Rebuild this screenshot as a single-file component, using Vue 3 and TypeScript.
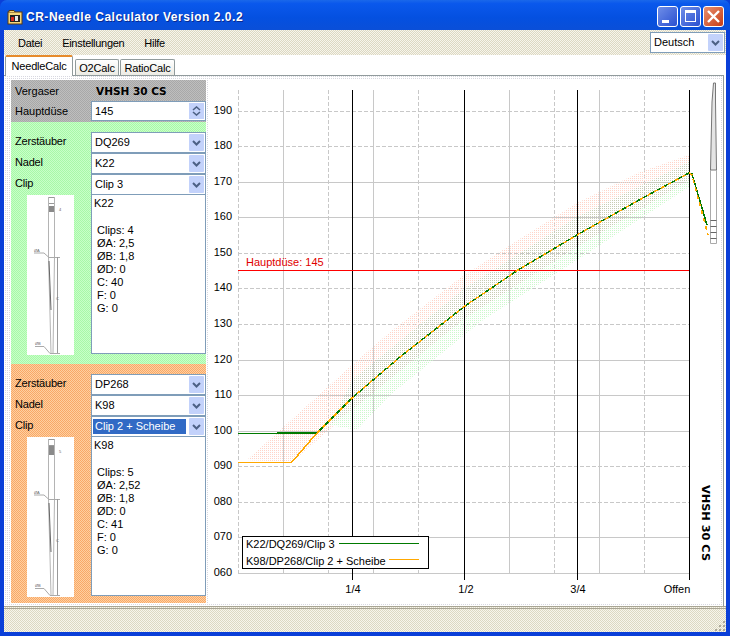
<template>
  <div class="window">
    <div class="titlebar">
      <svg class="app-icon" width="16" height="16" viewBox="0 0 16 16">
        <rect x="1" y="3" width="14" height="12" fill="#f4d67a" stroke="#5a3a10" />
        <path d="M2 3 V1.5 H7 L8 3" fill="#f4d67a" stroke="#5a3a10" />
        <rect x="3" y="6" width="10" height="7" fill="#222" />
        <rect x="4" y="8" width="3" height="4" fill="#d8261c" />
        <rect x="8" y="7" width="3" height="5" fill="#e8e8e8" />
      </svg>
      <span class="title">CR-Needle Calculator Version 2.0.2</span>
      <div class="caption-buttons">
        <button class="cap">
          <svg width="21" height="21" viewBox="0 0 21 21"><rect x="5" y="14" width="7" height="3" fill="#fff" /></svg>
        </button>
        <button class="cap">
          <svg width="21" height="21" viewBox="0 0 21 21"><rect x="5.5" y="5.5" width="10" height="10" fill="none" stroke="#fff" /><rect x="5" y="4" width="11" height="3" fill="#fff" /></svg>
        </button>
        <button class="cap close">
          <svg width="21" height="21" viewBox="0 0 21 21"><path d="M5 5 L16 16 M16 5 L5 16" stroke="#fff" stroke-width="2.4" /></svg>
        </button>
      </div>
    </div>

    <div class="client">
      <div class="menubar">
        <span class="menu-item">Datei</span>
        <span class="menu-item">Einstellungen</span>
        <span class="menu-item">Hilfe</span>
        <div class="combo lang">
          <span class="combo-text">Deutsch</span>
          <span class="combo-btn"><svg width="9" height="6" viewBox="0 0 9 6"><path d="M1 1 L4.5 4.5 L8 1" fill="none" stroke="#4d6185" stroke-width="2" /></svg></span>
        </div>
      </div>

      <div class="tabarea">
        <div class="tabs">
          <div class="tab active">NeedleCalc</div>
          <div class="tab o2">O2Calc</div>
          <div class="tab ratio">RatioCalc</div>
        </div>

        <div class="page">
          <div class="sidebar">
            <div class="head">
              <div class="row">
                <span class="label">Vergaser</span>
                <b class="carb">VHSH 30 CS</b>
              </div>
              <div class="row">
                <span class="label">Hauptdüse</span>
                <div class="combo spin">
                  <span class="combo-text">145</span>
                  <span class="spin-btn">
                    <svg width="9" height="5" viewBox="0 0 9 5"><path d="M1 4 L4.5 1 L8 4" fill="none" stroke="#4d6185" stroke-width="1.6" /></svg>
                    <svg width="9" height="5" viewBox="0 0 9 5"><path d="M1 1 L4.5 4 L8 1" fill="none" stroke="#4d6185" stroke-width="1.6" /></svg>
                  </span>
                </div>
              </div>
            </div>

            <section v-for="s in setups" :key="s.needle" class="setup" :class="s.cls">
              <div class="fields">
                <div class="labels">
                  <span>Zerstäuber</span>
                  <span>Nadel</span>
                  <span>Clip</span>
                </div>
                <div class="combos">
                  <div class="combo">
                    <span class="combo-text">{{ s.atomizer }}</span>
                    <span class="combo-btn"><svg width="9" height="6" viewBox="0 0 9 6"><path d="M1 1 L4.5 4.5 L8 1" fill="none" stroke="#4d6185" stroke-width="2" /></svg></span>
                  </div>
                  <div class="combo">
                    <span class="combo-text">{{ s.needle }}</span>
                    <span class="combo-btn"><svg width="9" height="6" viewBox="0 0 9 6"><path d="M1 1 L4.5 4.5 L8 1" fill="none" stroke="#4d6185" stroke-width="2" /></svg></span>
                  </div>
                  <div class="combo">
                    <span class="combo-text" :class="{ selected: s.selected }">{{ s.clip }}</span>
                    <span class="combo-btn"><svg width="9" height="6" viewBox="0 0 9 6"><path d="M1 1 L4.5 4.5 L8 1" fill="none" stroke="#4d6185" stroke-width="2" /></svg></span>
                  </div>
                </div>
              </div>
              <div class="detail">
                <div class="drawing">
                  <svg width="47" height="160" viewBox="0 0 47 160">
                    <rect x="21.5" y="2.5" width="6" height="6" fill="none" stroke="#999" />
                    <rect x="21" :y="s.hatchY" width="7" :height="s.hatchH" fill="#8a8a8a" />
                    <path d="M21.5 2 V62 L24 158 M27.5 2 V62 L26 158" fill="none" stroke="#b4b4b4" />
                    <path d="M22 66 L24 115" stroke="#666" fill="none" />
                    <path d="M7 58 H17 L22 62.5 H33 M8 151.5 H17 L23 158.5 H33" fill="none" stroke="#aaa" />
                    <path d="M30.5 62 V158" fill="none" stroke="#999" />
                    <text x="32" y="16" class="tiny">{{ s.clips }}</text>
                    <text x="7" y="57" class="tiny">ØA</text>
                    <text x="29" y="105" class="tiny">C</text>
                    <text x="8" y="150" class="tiny">ØB</text>
                  </svg>
                </div>
                <div class="specs">
                  <div>{{ s.needle }}</div>
                  <div class="spec-list">
                    <div>Clips: {{ s.clips }}</div>
                    <div>ØA: {{ s.a }}</div>
                    <div>ØB: {{ s.b }}</div>
                    <div>ØD: 0</div>
                    <div>C: {{ s.c }}</div>
                    <div>F: 0</div>
                    <div>G: 0</div>
                  </div>
                </div>
              </div>
            </section>
          </div>

          <div class="chart">
            <svg width="512" height="523" viewBox="208 80 512 523">
              <defs>
                <pattern id="pinkDots" width="2" height="2" patternUnits="userSpaceOnUse">
                  <rect width="1" height="1" fill="#ffd4c8" />
                </pattern>
                <pattern id="greenDots" width="2" height="2" patternUnits="userSpaceOnUse">
                  <rect width="1" height="1" fill="#ccf8cc" />
                </pattern>
                <pattern id="greyDots" width="2" height="2" patternUnits="userSpaceOnUse">
                  <rect width="1" height="1" fill="#c8ccb4" />
                </pattern>
              </defs>

              <line v-for="g in hGrid" :key="g.y" x1="238" x2="689" :y1="g.y" :y2="g.y" stroke="#c8c8c8"
                :stroke-dasharray="g.dashed ? '4 2' : undefined" />
              <line v-for="g in vGrid" :key="g.x" :x1="g.x" :x2="g.x" y1="90" y2="573" stroke="#c8c8c8"
                :stroke-dasharray="g.dashed ? '4 2' : undefined" />

              <polygon fill="url(#pinkDots)" points="247,460 300,412 352,365 390,332 460,278 518,240 577,203 640,172 689,155 689,180 577,247 465,318 352,410 292,462" />
              <polygon fill="url(#greenDots)" points="330,425 352,380 465,288 577,217 689,162 689,187 577,260 483,320 390,395 357,430" />
              <polygon fill="url(#greyDots)" points="330,425 352,380 465,288 577,217 689,162 689,180 577,247 465,318 352,410" />

              <line v-for="x in [352.5, 464.5, 577.5, 689.5]" :key="x" :x1="x" :x2="x" y1="90" y2="580" stroke="#000" />

              <line x1="238" x2="689" y1="270.5" y2="270.5" stroke="#ff0000" />
              <text x="246" y="266" class="hd">Hauptdüse: 145</text>

              <polyline :points="greenCurve" fill="none" stroke="#007a00" stroke-width="1.5" shape-rendering="crispEdges" />
              <polyline :points="orangeCurve" fill="none" stroke="#ffa800" stroke-width="1.5" stroke-dasharray="4 4" shape-rendering="crispEdges" />
              <polyline points="238,462.5 291.5,462.5 317,433" fill="none" stroke="#ffa800" stroke-width="1.5" shape-rendering="crispEdges" />

              <text v-for="t in yLabels" :key="t.label" x="232" :y="t.y + 3" text-anchor="end" class="axis">{{ t.label }}</text>
              <text v-for="t in xLabels" :key="t.label" :x="t.x" y="593" text-anchor="middle" class="axis">{{ t.label }}</text>

              <text class="vert" transform="translate(702 485) rotate(90)">VHSH 30 CS</text>

              <!-- Nadel oben rechts -->
              <g fill="none">
                <path d="M713.5 83 H715.5 V102 L716.5 170 H710.5 L712 102 Z" fill="#e4e4e4" stroke="#777" />
                <path d="M710.5 170 V243.5 H716.5 V170" stroke="#aaa" />
                <path d="M710.5 220.5 H716.5 M710.5 226.5 H716.5 M710.5 232.5 H716.5 M710.5 238.5 H716.5" stroke="#666" />
              </g>

              <g>
                <rect x="242.5" y="536.5" width="186" height="32" fill="#fff" stroke="#000" />
                <text x="246" y="548" class="axis">K22/DQ269/Clip 3</text>
                <line x1="339" x2="419" y1="543.5" y2="543.5" stroke="#007a00" />
                <text x="246" y="565" class="axis">K98/DP268/Clip 2 + Scheibe</text>
                <line x1="389" x2="419" y1="559.5" y2="559.5" stroke="#ffa800" />
              </g>
            </svg>
          </div>
        </div>
      </div>

      <div class="statusbar">
        <svg width="12" height="12" viewBox="0 0 12 12" class="grip">
          <g fill="#aca899">
            <rect x="9" y="1" width="2" height="2" />
            <rect x="5" y="5" width="2" height="2" />
            <rect x="9" y="5" width="2" height="2" />
            <rect x="1" y="9" width="2" height="2" />
            <rect x="5" y="9" width="2" height="2" />
            <rect x="9" y="9" width="2" height="2" />
          </g>
        </svg>
      </div>
    </div>
  </div>
</template>

<script setup lang="ts">
interface Setup {
  cls: string
  atomizer: string
  needle: string
  clip: string
  clips: number
  a: string
  b: string
  c: number
  selected: boolean
  hatchY: number
  hatchH: number
}

const setups: Setup[] = [
  { cls: 'green', atomizer: 'DQ269', needle: 'K22', clip: 'Clip 3', clips: 4, a: '2,5', b: '1,8', c: 40, selected: false, hatchY: 11, hatchH: 6 },
  { cls: 'orange', atomizer: 'DP268', needle: 'K98', clip: 'Clip 2 + Scheibe', clips: 5, a: '2,52', b: '1,8', c: 41, selected: true, hatchY: 9, hatchH: 9 },
]

const yFor = (v: number) => Math.round(573 - (v - 60) * 3.557) + 0.5

const solidRows = [170, 160, 120, 110, 100, 70, 60]
const rows = [190, 180, 170, 160, 150, 140, 130, 120, 110, 100, 90, 80, 70, 60]

const hGrid = rows.map((v) => ({
  y: yFor(v),
  dashed: !solidRows.includes(v),
}))

const vGrid = [
  { x: 238.5, dashed: true },
  { x: 283.5, dashed: false },
  { x: 328.5, dashed: true },
  { x: 373.5, dashed: false },
  { x: 418.5, dashed: true },
  { x: 509.5, dashed: false },
  { x: 554.5, dashed: true },
  { x: 599.5, dashed: false },
  { x: 644.5, dashed: true },
]

const yLabels = rows.map((v) => ({
  label: v < 100 ? '0' + v : String(v),
  y: yFor(v) - 1,
}))

const xLabels = [
  { label: '1/4', x: 353 },
  { label: '1/2', x: 466 },
  { label: '3/4', x: 578 },
  { label: 'Offen', x: 677 },
]

const curve = '317,433 352,398 400,357 465,306 518,270 577,235 640,199.5 689,173'
const greenCurve = '238,433.5 ' + curve + ' 692,174 707,225'
const orangeCurve = curve + ' 692,175 708,235'
</script>

<style scoped>
.window {
  width: 730px;
  height: 636px;
  box-sizing: border-box;
  display: flex;
  flex-direction: column;
  background: #0a3fd8;
  padding: 0 4px 4px;
  font-family: "Liberation Sans", Arial, sans-serif;
  font-size: 11px;
  color: #000;
  overflow: hidden;
}

.titlebar {
  height: 30px;
  flex: none;
  box-sizing: border-box;
  margin: 0 -4px;
  padding: 3px 6px 0 7px;
  display: flex;
  align-items: center;
  background: linear-gradient(#1a68ea, #0a58ec 12%, #0450e0 60%, #0a4fd8);
  border-radius: 7px 7px 0 0;
}

.title {
  color: #fff;
  font-family: "Liberation Sans", Arial, sans-serif;
  font-size: 12px;
  font-weight: bold;
  letter-spacing: 0.52px;
  margin-left: 3px;
  flex: 1;
  text-shadow: 1px 1px 0 #0a2a90;
}

.caption-buttons {
  display: flex;
  gap: 2px;
}

.cap {
  width: 21px;
  height: 21px;
  padding: 0;
  border: 1px solid #fff;
  border-radius: 3px;
  background: linear-gradient(135deg, #6f8ee8, #2a50d0);
  display: block;
}

.cap svg {
  display: block;
  margin: -1px;
}

.cap.close {
  background: linear-gradient(135deg, #e89070, #c83c14);
}

.client {
  flex: 1;
  min-height: 0;
  display: flex;
  flex-direction: column;
  background: #ece9d8;
}

.menubar {
  height: 25px;
  flex: none;
  display: flex;
  align-items: center;
  padding: 0 1px 0 14px;
  background: repeating-conic-gradient(#dcd8c2 0 25%, #f7f5ec 0 50%) 0 0 / 2px 2px;
}

.menu-item {
  margin-right: 20px;
  letter-spacing: -0.3px;
}

.combo {
  display: flex;
  align-items: center;
  box-sizing: border-box;
  height: 21px;
  border: 1px solid #7f9db9;
  background: #fff;
  padding: 1px;
}

.combo.lang {
  margin-left: auto;
  width: 75px;
}

.combo-text {
  flex: 1;
  padding: 0 2px;
  line-height: 15px;
  white-space: nowrap;
}

.combo-text.selected {
  background: #316ac5;
  color: #fff;
}

.combo-btn {
  width: 15px;
  height: 17px;
  flex: none;
  margin-left: 3px;
  display: flex;
  align-items: center;
  justify-content: center;
  background: #c3d2fb;
  border-radius: 1px;
}

.tabarea {
  flex: 1;
  min-height: 0;
  display: flex;
  flex-direction: column;
  background: #fff;
}

.tabs {
  flex: none;
  height: 21px;
  box-sizing: border-box;
  display: flex;
  align-items: flex-end;
  margin-right: 2px;
  padding-left: 1px;
  gap: 1px;
  border-bottom: 1px solid #919b9c;
}

.tab {
  box-sizing: border-box;
  height: 16px;
  line-height: 16px;
  text-align: center;
  border: 1px solid #919b9c;
  border-bottom: none;
  border-radius: 2px 2px 0 0;
  background: linear-gradient(#fff, #ecebe4);
  letter-spacing: -0.2px;
}

.tab.o2 {
  width: 44px;
}

.tab.ratio {
  width: 55px;
}

.tab.active {
  width: 68px;
  height: 21px;
  line-height: 18px;
  margin-right: 1px;
  margin-bottom: -1px;
  background: #fff;
  border-top: 2px solid #e68b2c;
  position: relative;
}

.page {
  flex: 1;
  min-height: 0;
  display: flex;
  margin-right: 2px;
  border-right: 1px solid #919b9c;
  padding: 4px 3px 3px 7px;
  background: conic-gradient(#d8d8e0 25%, #fff 0) 0 0 / 2px 2px;
}

.sidebar {
  width: 195px;
  flex: none;
  display: flex;
  flex-direction: column;
}

.head {
  background: repeating-conic-gradient(#a8a8a8 0 25%, #bebebe 0 50%) 0 0 / 2px 2px;
  height: 42px;
  padding: 1px 0 0 4px;
  box-sizing: border-box;
  flex: none;
}

.row {
  display: flex;
  align-items: center;
  height: 20px;
}

.row .label {
  width: 76px;
}

.carb {
  font-family: "DejaVu Sans", sans-serif;
  font-size: 10.5px;
  margin-left: 5px;
}

.spin {
  flex: 1;
  height: 20px;
}

.spin-btn {
  width: 15px;
  height: 16px;
  display: flex;
  flex-direction: column;
  align-items: center;
  justify-content: center;
  background: #c3d2fb;
}

.setup {
  padding-top: 10px;
  box-sizing: border-box;
  display: flex;
  flex-direction: column;
}

.setup.green {
  height: 242px;
  background: repeating-conic-gradient(#a8f8a8 0 25%, #c8ffc8 0 50%) 0 0 / 2px 2px;
}

.setup.orange {
  height: 239px;
  background: repeating-conic-gradient(#f8a868 0 25%, #ffd0a0 0 50%) 0 0 / 2px 2px;
}

.fields {
  display: flex;
}

.labels {
  width: 80px;
  padding: 3px 0 0 4px;
  box-sizing: border-box;
  display: flex;
  flex-direction: column;
  gap: 8px;
  letter-spacing: -0.2px;
}

.labels span {
  line-height: 13px;
}

.combos {
  flex: 1;
  display: flex;
  flex-direction: column;
}

.detail {
  display: flex;
}

.drawing {
  width: 80px;
  box-sizing: border-box;
  padding-left: 16px;
}

.drawing svg {
  display: block;
  background: #fff;
}

.tiny {
  font-size: 4px;
  fill: #666;
  font-family: "Liberation Sans", sans-serif;
}

.specs {
  flex: 1;
  height: 159px;
  box-sizing: border-box;
  border: 1px solid #7f9db9;
  border-top: none;
  background: #fff;
  padding: 2px;
  line-height: 13px;
}

.spec-list {
  margin-top: 14px;
  padding-left: 3px;
}

.chart {
  flex: 1;
  min-width: 0;
  margin-left: 2px;
  overflow: hidden;
  background: #fff;
}

.chart svg {
  display: block;
}

.axis,
.hd {
  font-family: "Liberation Sans", Arial, sans-serif;
  font-size: 11px;
  fill: #000;
}

.hd {
  fill: #e00000;
}

.vert {
  font-family: "DejaVu Sans", sans-serif;
  font-size: 11.3px;
  font-weight: bold;
}

.statusbar {
  height: 26px;
  flex: none;
  box-sizing: border-box;
  border-top: 3px double #a8a494;
  display: flex;
  justify-content: flex-end;
  align-items: flex-end;
  background: repeating-conic-gradient(#dcd8c2 0 25%, #f7f5ec 0 50%) 0 0 / 2px 2px;
}

.grip {
  display: block;
}
</style>
